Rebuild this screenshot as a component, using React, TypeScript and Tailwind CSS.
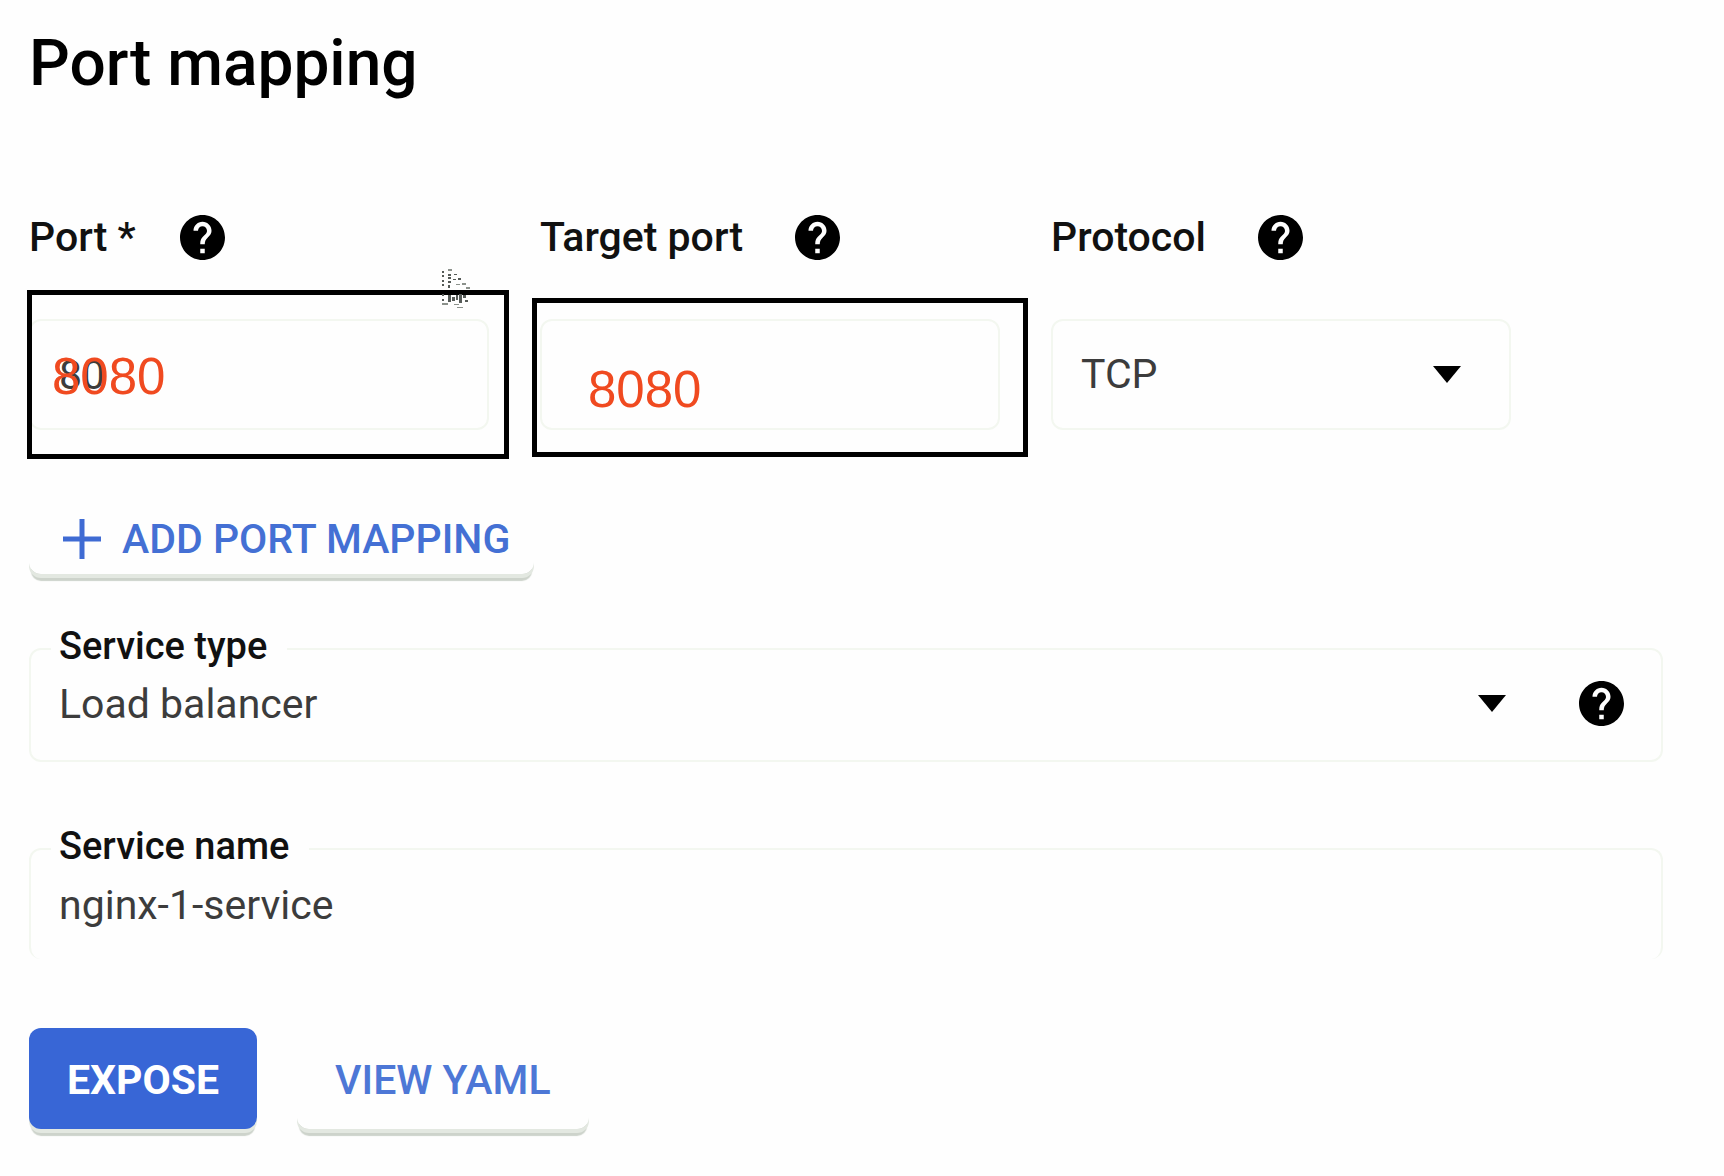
import { useState, type ReactNode } from "react";

function HelpButton({ label }: { label: string }) {
  return (
    <button type="button" aria-label={label} className="shrink-0 rounded-full">
      <svg viewBox="2 2 20 20" className="block size-[45px]" aria-hidden="true">
        <path
          fill="#000"
          d="M12 2C6.48 2 2 6.48 2 12s4.48 10 10 10 10-4.48 10-10S17.52 2 12 2zm1 17h-2v-2h2v2zm2.07-7.75l-.9.92C13.45 12.9 13 13.5 13 15h-2v-.5c0-1.1.45-2.1 1.17-2.83l1.24-1.26c.37-.36.59-.86.59-1.41 0-1.1-.9-2-2-2s-2 .9-2 2H8c0-2.21 1.79-4 4-4s4 1.79 4 4c0 .88-.36 1.68-.93 2.25z"
        />
      </svg>
    </button>
  );
}

function Arrow() {
  return (
    <svg viewBox="0 0 28 17" className="block h-[17px] w-7" aria-hidden="true">
      <path fill="#000" d="M0 0h28L14 17z" />
    </svg>
  );
}

/* Stippled mouse pointer: [x, y, width, height] of each mark. */
const marks = [
  [1, 3, 2, 2], [1, 7, 2, 2], [1, 12, 2, 2], [1, 16, 2, 2], [1, 26, 2, 2], [1, 31, 2, 2], [1, 35, 6, 2],
  [7, 1, 4, 2], [7, 6, 3, 2], [7, 9, 3, 2], [7, 13, 3, 2], [7, 17, 2, 3],
  [13, 6, 3, 1], [17, 10, 3, 2], [12, 11, 3, 1], [21, 15, 4, 2], [15, 16, 4, 1], [25, 19, 4, 2],
  [7, 27, 3, 7], [11, 29, 3, 4], [15, 27, 2, 5], [18, 26, 3, 9], [22, 27, 3, 3], [24, 32, 3, 2], [13, 36, 5, 1], [16, 39, 6, 1],
];

function Pointer() {
  return (
    <svg viewBox="0 0 34 44" className="pointer-events-none absolute -top-[51px] right-[14px] h-11 w-[34px]" aria-hidden="true">
      {marks.map(([x, y, w, h]) => (
        <rect key={x + "-" + y} x={x} y={y} width={w} height={h} fill={w > 3 ? "#8b918b" : "#555a57"} />
      ))}
    </svg>
  );
}

type ColumnProps = { id: string; label: string; help: string; required?: boolean; children: ReactNode };

function Column({ id, label, help, required, children }: ColumnProps) {
  return (
    <div className="flex min-w-0 flex-col gap-[58px]">
      <div className={required ? "flex items-center gap-11" : "flex items-center gap-13"}>
        <label htmlFor={id} className="text-[41px] leading-12 font-medium whitespace-nowrap">
          {label}
        </label>
        <HelpButton label={help} />
      </div>
      <div className="relative">{children}</div>
    </div>
  );
}

const box =
  "block w-full appearance-none rounded-xl border-2 border-[#f3f7f0] bg-transparent px-7 text-[41px] text-[#3c3c3c] outline-none";
const raised = "shadow-[0_4px_0_#e3e8e1,0_9px_1px_-2px_#cdd3cb]";
const note = "font-['Liberation_Sans',sans-serif] text-[51px] leading-none text-[#f04a20]";
const legend = "absolute -top-[22px] left-[22px] bg-[#fefefe] px-2 pr-5 text-[38px] leading-10 font-medium";

export default function App() {
  const [port, setPort] = useState("80");
  const [target, setTarget] = useState("");
  const [name, setName] = useState("nginx-1-service");
  return (
    <main className="min-h-screen bg-[#fefefe] pt-6 pr-[61px] pb-11 pl-[29px] font-['Roboto',sans-serif] text-[#111]">
      <h1 className="text-[64px] leading-20 font-medium text-black">Port mapping</h1>

      <div className="mt-[109px] grid max-w-[1482px] grid-cols-3 gap-[51px]">
        <Column id="port" label="Port *" help="About port" required>
          <input id="port" className={box + " h-[111px]"} value={port} onChange={(e) => setPort(e.target.value)} />
          <div className="pointer-events-none absolute -top-[29px] -right-[20px] -bottom-[29px] -left-[2px] flex items-center border-5 border-black pt-1 pl-[20px]">
            <span className={note}>8080</span>
          </div>
          <Pointer />
        </Column>
        <Column id="target" label="Target port" help="About target port">
          <input id="target" className={box + " h-[111px]"} value={target} onChange={(e) => setTarget(e.target.value)} />
          <div className="pointer-events-none absolute -top-[21px] -right-[28px] -bottom-[27px] -left-[8px] flex items-center border-5 border-black pt-6 pl-[51px]">
            <span className={note}>8080</span>
          </div>
        </Column>
        <Column id="protocol" label="Protocol" help="About protocol">
          <select id="protocol" className={box + " h-[111px]"}>
            <option>TCP</option>
            <option>UDP</option>
          </select>
          <div className="pointer-events-none absolute inset-y-0 right-[50px] flex items-center">
            <Arrow />
          </div>
        </Column>
      </div>

      <button
        type="button"
        className={"mt-[89px] flex h-[55px] items-start gap-5 rounded-b-xl pr-[24px] pl-[33px] text-[41px] font-medium text-[#4470d4] " + raised}
      >
        <svg viewBox="0 0 40 40" className="size-10 shrink-0" aria-hidden="true">
          <path d="M20 0v40M1 20h38" stroke="#3f6bd3" strokeWidth="5" />
        </svg>
        <span className="leading-10">ADD PORT MAPPING</span>
      </button>

      <div className="relative mt-[74px]">
        <label htmlFor="type" className={legend}>
          Service type
        </label>
        <select id="type" className={box + " h-[114px]"}>
          <option>Load balancer</option>
          <option>Cluster IP</option>
          <option>Node port</option>
        </select>
        <div className="absolute inset-y-0 right-[39px] flex items-center gap-[73px] pb-1">
          <Arrow />
          <HelpButton label="About service type" />
        </div>
      </div>

      <div className="relative mt-[86px]">
        <label htmlFor="name" className={legend}>
          Service name
        </label>
        <input id="name" className={box + " h-[111px] border-b-0"} value={name} onChange={(e) => setName(e.target.value)} />
      </div>

      <div className="mt-[69px] flex gap-10">
        <button type="button" className={"h-[101px] rounded-xl bg-[#3866d6] px-[38px] pt-1 text-[41px] font-bold text-white " + raised}>
          EXPOSE
        </button>
        <button type="button" className={"h-[101px] rounded-xl px-[38px] pt-1 text-[41px] font-medium text-[#4d77d6] " + raised}>
          VIEW YAML
        </button>
      </div>
    </main>
  );
}
